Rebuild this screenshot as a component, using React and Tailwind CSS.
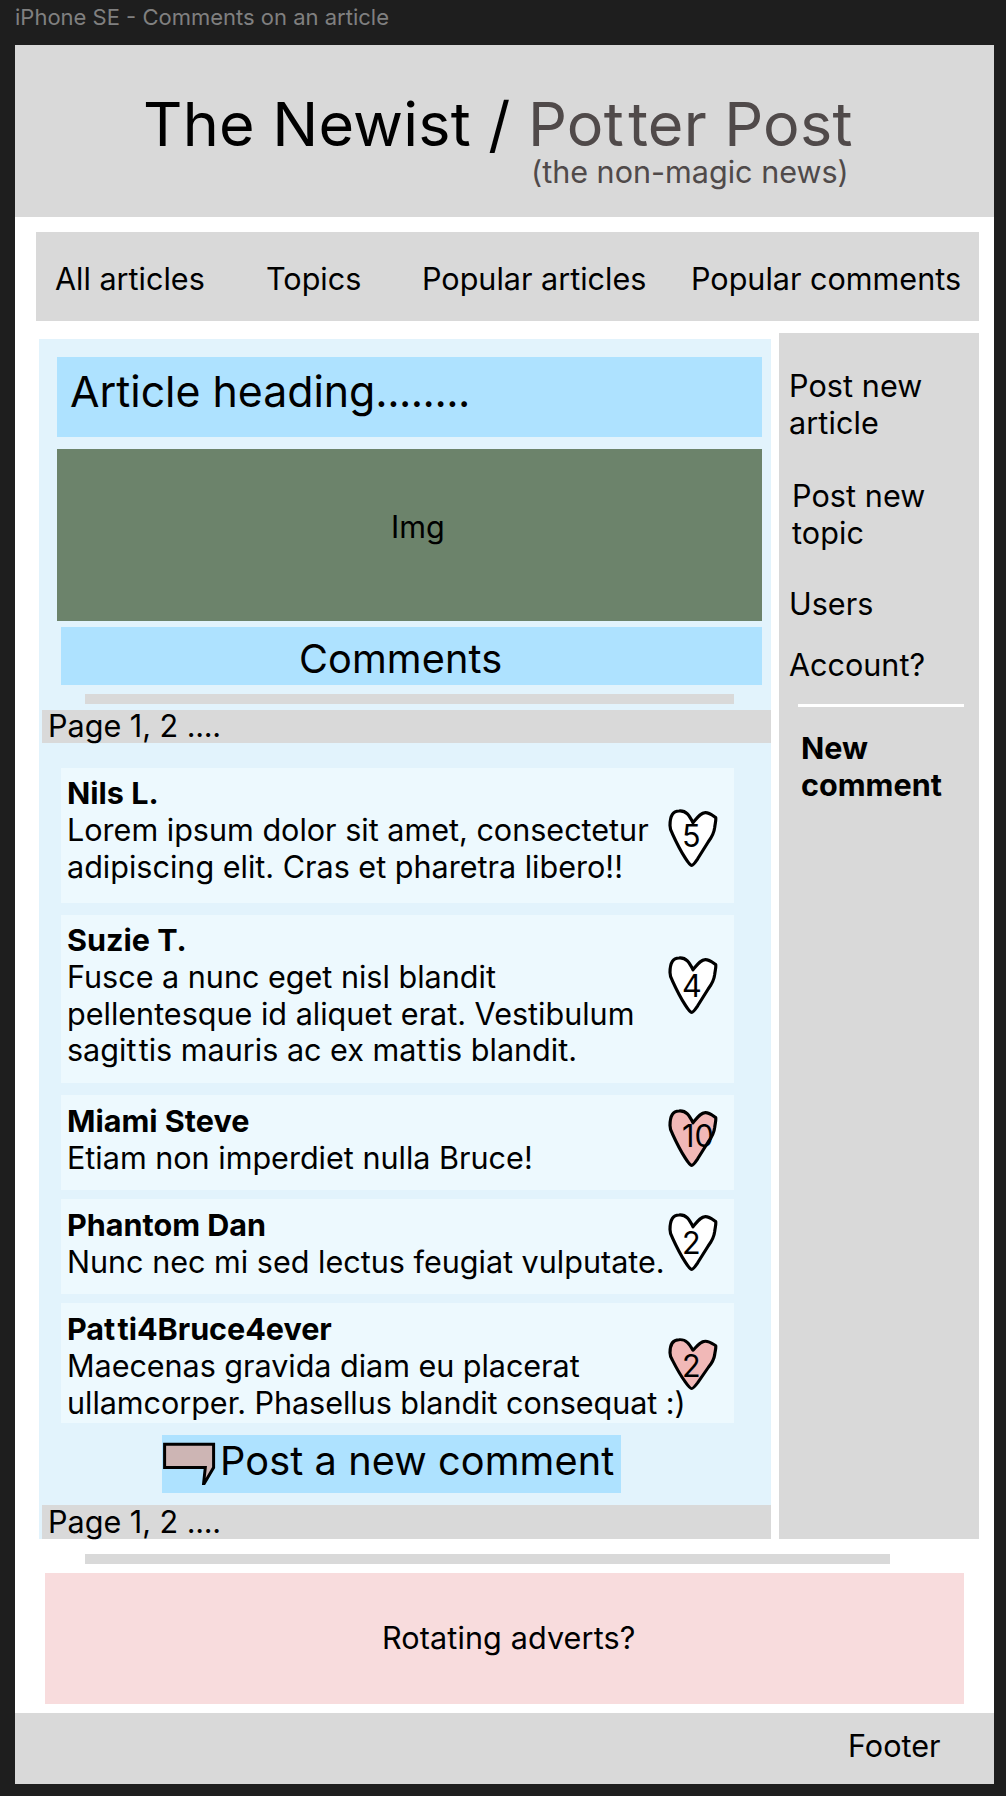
const comments = [
  {
    author: "Nils L.",
    lines: ["Lorem ipsum dolor sit amet, consectetur", "adipiscing elit. Cras et pharetra libero!!"],
    likes: 5,
    liked: false,
    card: "mt-[25px] h-[135px] pt-[7px]",
    heart: "top-[41px] h-[58px]",
    count: "top-[50px]",
  },
  {
    author: "Suzie T.",
    lines: ["Fusce a nunc eget nisl blandit", "pellentesque id aliquet erat. Vestibulum", "sagittis mauris ac ex mattis blandit."],
    likes: 4,
    liked: false,
    card: "mt-3 h-[168px] pt-[7px]",
    heart: "top-[41px] h-[58px]",
    count: "top-[53px]",
  },
  {
    author: "Miami Steve",
    lines: ["Etiam non imperdiet nulla Bruce!"],
    likes: 10,
    liked: true,
    card: "mt-3 h-[95px] pt-[8px]",
    heart: "top-[14px] h-[58px]",
    count: "top-[23px]",
  },
  {
    author: "Phantom Dan",
    lines: ["Nunc nec mi sed lectus feugiat vulputate."],
    likes: 2,
    liked: false,
    card: "mt-[9px] h-[95px] pt-[8px]",
    heart: "top-[14px] h-[58px]",
    count: "top-[26px]",
  },
  {
    author: "Patti4Bruce4ever",
    lines: ["Maecenas gravida diam eu placerat", "ullamcorper. Phasellus blandit consequat :)"],
    likes: 2,
    liked: true,
    card: "mt-[9px] h-[120px] pt-[8px] tracking-[-0.04px]",
    heart: "top-[35px] h-[52px]",
    count: "top-[45px]",
  },
];

/* Opens up the tight "tt" pair of the typeface. */
function Spaced({ children }) {
  return children.split("tt").map((part, i) =>
    i === 0 ? (
      part
    ) : (
      <span key={i}>
        <span className="tracking-[0.075em]">t</span>t{part}
      </span>
    )
  );
}

function Heart({ liked, className }) {
  return (
    <svg
      viewBox="0 0 150 177"
      preserveAspectRatio="none"
      className={`absolute left-[607px] w-[50px] ${className}`}
      fill={liked ? "#f1b8b7" : "#ffffff"}
      stroke="#000"
      strokeWidth="9.5"
      strokeLinejoin="round"
    >
      <path d="M6 50 C6 22 15 6 33 6 C55 4 64 20 75 42 C87 28 97 11 112 11 C124 11 132 18 143 26 C145 33 141 45 140 57 C138 74 130 88 121 100 L89 152 C79 167 75 172 71 172 C67 172 60 163 52 150 C38 128 25 102 13 75 C8 66 6 60 6 50 Z" />
    </svg>
  );
}

function Comment({ author, lines, likes, liked, card, heart, count }) {
  return (
    <article className={`relative ml-[22px] w-[673px] bg-[#edf9fe] pl-[6px] whitespace-nowrap ${card}`}>
      <h3 className="font-bold">
        <Spaced>{author}</Spaced>
      </h3>
      {lines.map((line) => (
        <p key={line}>
          <Spaced>{line}</Spaced>
        </p>
      ))}
      <Heart liked={liked} className={heart} />
      <span className={`absolute left-[621px] ${count}`}>{likes}</span>
    </article>
  );
}

function Pager({ className, label }) {
  return (
    <div className={`ml-[3px] bg-[#d9d9d9] pl-[6px] ${className}`}>
      <div className={label}>
        Page 1, 2 <span className="tracking-[-0.3px]">....</span>
      </div>
    </div>
  );
}

export default function App() {
  return (
    <div className="h-[1796px] w-[1006px] overflow-hidden bg-[#1e1e1e] font-['Inter',sans-serif] text-[30.55px] leading-[36.8px] text-black [font-optical-sizing:none]">
      <div className="h-[45px] pt-[4px] pl-[15px] text-[22px] leading-[27px] text-[#808080]">
        iPhone SE - Comments on an article
      </div>
      <div className="ml-[15px] flex h-[1739px] w-[979px] flex-col bg-white">
        <header className="h-[172px] shrink-0 bg-[#d9d9d9] pt-[46px] pl-[128px] whitespace-nowrap">
          <h1 className="text-[61.1px] leading-[66px] tracking-[0.2px]">
            The Newist / <span className="text-[#504a4a]"><Spaced>Potter Post</Spaced></span>
          </h1>
          <p className="-mt-[3px] ml-[388px] text-[#504a4a]">(the non-magic news)</p>
        </header>

        <nav className="mt-[15px] ml-[21px] grid h-[89px] w-[943px] shrink-0 grid-cols-[211px_156px_269px_1fr] bg-[#d9d9d9] pt-[29px] pl-[19px] whitespace-nowrap">
          <a>All articles</a>
          <a>Topics</a>
          <a>Popular articles</a>
          <a>Popular comments</a>
        </nav>

        <div className="mt-3 flex h-[1206px] shrink-0 pl-6">
          <main className="mt-[6px] flex h-[1200px] w-[732px] flex-col bg-[#e2f3fc]">
            <h2 className="mt-[18px] ml-[18px] h-[80px] w-[705px] bg-[#aee2ff] pt-[9px] pl-[13px] text-[42.8px] leading-[52px]">
              Article heading<span className="tracking-[-0.5px]">........</span>
            </h2>
            <div className="mt-3 ml-[18px] h-[172px] w-[705px] bg-[#6c836b] pt-[60px] pl-[334px]">Img</div>
            <h2 className="mt-[6px] ml-[22px] h-[58px] w-[701px] bg-[#aee2ff] pt-[8px] pl-[238px] text-[39.7px] leading-[48px] tracking-[0.1px]">
              Comments
            </h2>
            <div className="mt-[9px] ml-[46px] h-[10px] w-[649px] bg-[#d9d9d9]" />
            <Pager className="mt-[6px] h-[33px]" label="-mt-[2px]" />
            {comments.map((comment) => (
              <Comment key={comment.author} {...comment} />
            ))}
            <button className="mt-3 ml-[123px] flex h-[58px] w-[459px] items-start bg-[#aee2ff] text-[39.7px] leading-[48px] tracking-[0.1px] whitespace-nowrap">
              <svg viewBox="0 0 54 51" className="mt-[6px] h-[51px] w-[54px]" fill="#cdb5b4" stroke="#000" strokeWidth="3">
                <path d="M2.6 3.2 H51.6 V26.5 L42.2 42.4 H41.6 L43.3 26.6 H2.6 Z" />
              </svg>
              <span className="mt-[2px] ml-[4px]">Post a new comment</span>
            </button>
            <Pager className="mt-3 h-[34px]" label="-mt-[1px]" />
          </main>

          <aside className="ml-2 w-[200px] bg-[#d9d9d9] pt-[35px] pl-[10px]">
            <p className="tracking-[0.1px]">Post new<br />article</p>
            <p className="mt-[36.7px] ml-[3px] tracking-[0.1px]">Post new<br />topic</p>
            <p className="mt-[34px]">Users</p>
            <p className="mt-6">Account?</p>
            <div className="mt-[21px] ml-[9px] h-[3px] w-[166px] bg-white" />
            <p className="mt-[23px] ml-[12px] font-bold">New<br />comment</p>
          </aside>
        </div>

        <div className="mt-[15px] ml-[70px] h-[10px] w-[805px] shrink-0 bg-[#d9d9d9]" />
        <section className="mt-[9px] ml-[30px] h-[131px] w-[919px] shrink-0 bg-[#f8dcdd] pt-[47px] pl-[337px] tracking-[0.12px]">
          Rotating adverts?
        </section>
        <footer className="mt-[9px] flex-1 bg-[#d9d9d9] pt-[15px] pl-[833px]">Footer</footer>
      </div>
    </div>
  );
}
